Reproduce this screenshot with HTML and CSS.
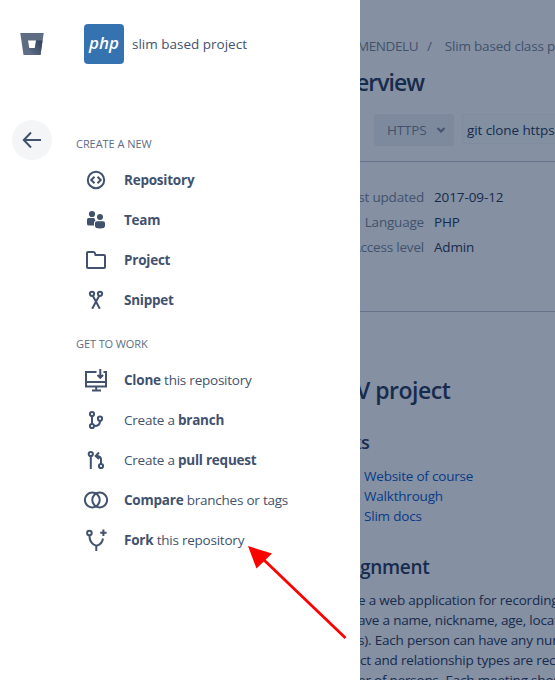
FILE: index.html
```
<!DOCTYPE html>
<html lang="en">
<head>
<meta charset="utf-8">
<title>slim based project</title>
<link rel="stylesheet" href="styles.css">
</head>
<body>
<div class="app">
  <aside class="drawer">
    <nav class="rail">
      <svg class="bucket" width="24" height="22" viewBox="0 0 24 22"><defs><linearGradient id="g" x1="1" y1="0.2" x2="0.2" y2="1"><stop offset="0" stop-color="#344563"/><stop offset="1" stop-color="#5e6c84"/></linearGradient></defs><path d="M.3 0h23.4L20.500 22h-17z" fill="#5e6c84"/><path d="M15.500 7.500h7L20.500 22h-9l-3-7.500h6z" fill="url(#g)"/><path d="M8 7.500h8l-1.300 7.500H9.300z" fill="#fff"/></svg>
      <span class="back"><svg width="20" height="18" viewBox="0 0 20 18"><path d="M19 9H2M9 1.500 1.800 9 9 16.500"/></svg></span>
    </nav>
    <section class="panel">
      <header class="project"><span class="avatar">php</span><span class="title">slim based project</span></header>
      <h4 class="create">CREATE A NEW</h4>
      <ul>
        <li><svg viewBox="0 0 24 24"><circle cx="12" cy="12" r="8.200"/><path d="m10.500 8.800-3.200 3.200 3.200 3.200M13.500 8.800l3.200 3.200-3.200 3.200"/></svg><b>Repository</b></li>
        <li><svg viewBox="0 0 24 24"><g class="solid"><circle cx="8" cy="6" r="3.100"/><circle cx="16" cy="9" r="3"/><path d="M3 11.500Q3 10 4.500 10h5.700l1.300 2.600Q10 13.500 10 15v2.500H5Q3 17.500 3 16zM11 15q0-1.800 1.800-1.800h6.400q1.800 0 1.800 1.800v3q0 2.500-5 2.500t-5-2.500z"/></g></svg><b>Team</b></li>
        <li><svg viewBox="0 0 24 24"><path d="M3 5q0-1 1-1h5.500q1 0 1.400 1l.6 2H20q1 0 1 1v11q0 1-1 1H4q-1 0-1-1z"/></svg><b>Project</b></li>
        <li><svg viewBox="0 0 24 24"><circle cx="8" cy="5.800" r="2.100"/><circle cx="16" cy="5.800" r="2.100"/><path d="m8.800 7.700 7 13M15.200 7.700l-7 13"/></svg><b>Snippet</b></li>
      </ul>
      <h4 class="work">GET TO WORK</h4>
      <ul>
        <li><svg viewBox="0 0 24 24"><path d="M12.500 4H2v14.500h20V4h-2.500M2 14h20M8 22.500h9M12.200 18v4M16.300 1v8.500M13.500 7l2.800 2.800L19.100 7"/></svg><span><b>Clone</b> this repository</span></li>
        <li><svg viewBox="0 0 24 24"><circle cx="8" cy="6" r="2.100"/><circle cx="8" cy="18" r="2.100"/><circle cx="16" cy="10.700" r="2.100"/><path d="M8 8v8M16 13q0 5-5.500 5"/></svg><span>Create a <b>branch</b></span></li>
        <li><svg viewBox="0 0 24 24"><circle cx="6.800" cy="6" r="2.100"/><circle cx="17" cy="18" r="2.100"/><path d="M6.800 8v13M17 16v-4.500q0-3.500-4.500-3.500M15 4.500 11.700 8l3.300 3"/></svg><span>Create a <b>pull request</b></span></li>
        <li><svg viewBox="0 0 24 24"><circle cx="8.300" cy="12" r="7.400"/><circle cx="15.700" cy="12" r="7.400"/></svg><span><b>Compare</b> branches or tags</span></li>
        <li><svg viewBox="0 0 24 24"><circle cx="5.400" cy="5" r="2.300"/><path d="M5.400 7.500c0 5.500 3 9.500 6.900 10.200 3.500-.7 6-3.300 6.700-7.200M12.300 17.500V23M16.200 4.700h6.400M19.400 1.500v6.400"/></svg><span><b>Fork</b> this repository</span></li>
      </ul>
    </section>
  </aside>
  <main class="page">
    <div class="crumbs"><span class="team">MENDELU</span><span class="slash">/</span><span class="repo">Slim based class p</span></div>
    <h1 class="overview">erview</h1>
    <div class="clone"><span class="protocol">HTTPS <svg width="10" height="8" viewBox="0 0 10 8"><path d="m1.500 2 3.500 3.500L8.500 2"/></svg></span><span class="command">git clone https</span></div>
    <dl>
      <div><dt>Last updated</dt><dd class="date">2017-09-12</dd></div>
      <div><dt>Language</dt><dd>PHP</dd></div>
      <div><dt>Access level</dt><dd>Admin</dd></div>
    </dl>
    <h1 class="name">V project</h1>
    <h2 class="links">ks</h2>
    <div class="linklist"><a>Website of course</a><a>Walkthrough</a><a>Slim docs</a></div>
    <h2 class="assignment">gnment</h2>
    <div class="text"><span class="l1">e a web application for recording</span><span class="l2">ave a name, nickname, age, locat</span><span class="l3">s). Each person can have any num</span><span class="l4">ct and relationship types are reco</span><span class="l5">er of persons. Each meeting shou</span></div>
  </main>
</div>
<svg class="pointer" width="100" height="96" viewBox="0 0 100 96"><path d="m16 14 81.500 78" stroke="red" stroke-width="2.800"/><path d="M0 0 24 7.500 8.500 22.500z" fill="red"/></svg>
</body>
</html>
```
FILE: styles.css
```
* { box-sizing: border-box; }
body { margin: 0; font: 13.5px/20px "Open Sans", "Noto Sans", sans-serif; color: #42526e; }
h1, h2, h4, ul, dl, dd { margin: 0; padding: 0; }
ul { list-style: none; }
.app { display: grid; grid-template-columns: 360px 195px; width: 555px; height: 680px; overflow: hidden; }
.drawer { display: grid; grid-template-columns: 64px 1fr; background: #fff; }
.rail { display: flex; flex-direction: column; align-items: center; padding-top: 33px; }
.back { display: flex; align-items: center; justify-content: center; width: 40px; height: 40px; margin-top: 65px; border-radius: 50%; background: #f4f5f7; }
svg { display: block; flex: none; }
.back svg, li svg, .protocol svg { fill: none; stroke: #42526e; stroke-width: 2; }
.panel { padding: 24px 0 0 12px; white-space: nowrap; }
.project { display: flex; align-items: center; height: 40px; padding-left: 8px; gap: 8px; }
.avatar { width: 40px; height: 40px; border-radius: 4px; background: #3572b0; color: #fff; font: italic 600 17px/38px "Open Sans", sans-serif; text-align: center; }
.title { font-weight: 500; letter-spacing: 0; }
h4 { font-size: 11px; line-height: 16px; font-weight: 400; color: #5e6c84; }
.create { margin: 72px 0 8px; letter-spacing: -.05px; }
.work { margin: 16px 0 8px; letter-spacing: -.1px; }
li { display: flex; align-items: center; height: 40px; padding-left: 8px; gap: 16px; letter-spacing: -.23px; }
li svg { width: 24px; height: 24px; }
b { font-weight: 700; }
.solid { fill: #42526e; stroke: none; }
.page { overflow: hidden; background: #8590a2; color: #172b4d; padding-top: 36px; white-space: nowrap; letter-spacing: -.2px; }
.crumbs { display: flex; height: 20px; color: #42526e; }
.team { margin-left: -3px; width: 61px; letter-spacing: -.4px; }
.slash { margin-left: 9px; width: 20px; }
.repo { margin-left: -1px; padding-left: 1px; }
h1 { font-size: 23px; line-height: 28px; font-weight: 600; color: #172b4d; letter-spacing: -.5px; }
.overview { margin: 12px 0 18px -4px; letter-spacing: -1px; }
.clone { display: flex; gap: 8px; height: 48px; padding-left: 14px; border-bottom: 1px solid #667289; }
.protocol { display: flex; align-items: center; justify-content: space-between; width: 80px; height: 32px; padding: 0 8px 0 13px; border-radius: 3px; background: #7d8a9d; color: #42526e; }
.command { flex: 1; height: 30px; padding-left: 4px; line-height: 30px; border: 1px solid #7f8b9e; border-right: 0; border-radius: 3px 0 0 3px; background: #8290a2; letter-spacing: -.1px; }
dl { height: 150px; padding-top: 23px; border-bottom: 1px solid #667289; }
dl div { display: flex; gap: 10px; height: 25px; line-height: 25px; }
.date { letter-spacing: -.1px; }
dt { display: flex; justify-content: flex-end; width: 64px; color: #42526e; }
.name { margin: 64px 0 26px -4px; }
h2 { font-size: 18px; line-height: 24px; font-weight: 600; letter-spacing: -.3px; }
.links { margin: 0 0 12px -9px; }
.linklist { display: flex; flex-direction: column; padding-left: 4px; color: #083b87; }
.assignment { margin: 29px 0 11px; font-size: 19px; }
.text { display: flex; flex-direction: column; }
.l1, .l2, .l3, .l5 { margin-left: -2px; }
.pointer { position: absolute; left: 248px; top: 546px; }
```
